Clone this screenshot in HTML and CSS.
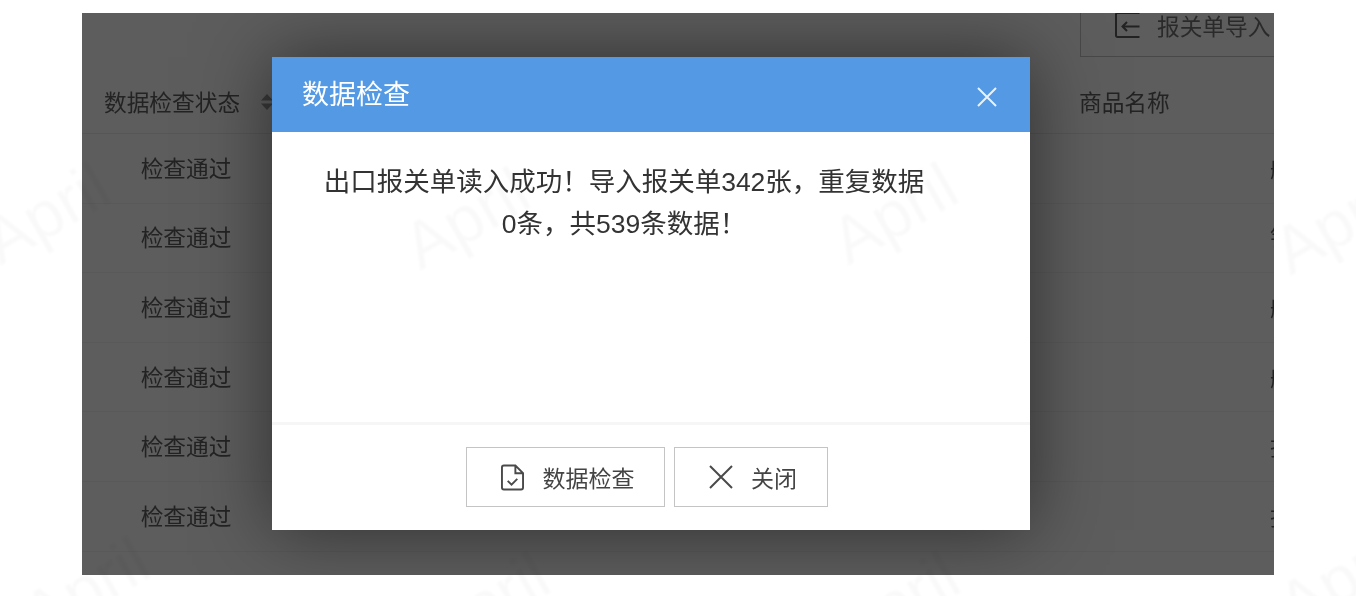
FILE: index.html
```html
<!DOCTYPE html>
<html lang="zh-CN">
<head>
<meta charset="utf-8">
<title>数据检查</title>
<link rel="stylesheet" href="styles.css">
</head>
<body>
<main class="stage">
  <div class="toolbar">
    <button class="import-btn" type="button">
      <svg class="import-icon" viewBox="0 0 26 26" aria-hidden="true"><path d="M24.500 1H2.500A1.500 1.500 0 0 0 1 2.500V23.500A1.500 1.500 0 0 0 2.500 25H24.500M24.500 14.500H7.500M12 10l-4.500 4.500 4.500 4.500"/></svg>
      <span>报关单导入</span>
    </button>
  </div>
  <div class="table">
    <div class="row head">
      <div class="cell status-head">数据检查状态<svg class="sort" viewBox="0 0 14 18" aria-hidden="true"><path d="M7 1l6 6.500H1zM7 17l6-6.500H1z"/></svg></div>
      <div class="cell"></div>
      <div class="cell">商品名称</div>
      <div class="cell"></div>
    </div>
    <div class="row"><div class="cell status">检查通过</div><div class="cell"></div><div class="cell"></div><div class="cell">船舶配件</div></div>
    <div class="row"><div class="cell status">检查通过</div><div class="cell"></div><div class="cell"></div><div class="cell">针织衫</div></div>
    <div class="row"><div class="cell status">检查通过</div><div class="cell"></div><div class="cell"></div><div class="cell">船舶配件</div></div>
    <div class="row"><div class="cell status">检查通过</div><div class="cell"></div><div class="cell"></div><div class="cell">船舶配件</div></div>
    <div class="row"><div class="cell status">检查通过</div><div class="cell"></div><div class="cell"></div><div class="cell">技术配件</div></div>
    <div class="row"><div class="cell status">检查通过</div><div class="cell"></div><div class="cell"></div><div class="cell">技术配件</div></div>
  </div>
  <section class="modal">
    <header class="modal-head">
      <h1>数据检查</h1>
      <svg class="close" viewBox="0 0 20 20" aria-hidden="true"><path d="M1 1l18 18M19 1L1 19"/></svg>
    </header>
    <div class="modal-body">
      <p>出口报关单读入成功！导入报关单342张，重复数据<br>0条，共539条数据！</p>
    </div>
    <footer class="modal-foot">
      <button class="btn check" type="button">
        <svg class="btn-icon doc" viewBox="0 0 24 27" aria-hidden="true"><path d="M15 1H3a2 2 0 0 0-2 2v21a2 2 0 0 0 2 2h18a2 2 0 0 0 2-2V9zM15 1v8h8M7 17l4 4 6-6"/></svg>
        <span>数据检查</span>
      </button>
      <button class="btn shut" type="button">
        <svg class="btn-icon cross" viewBox="0 0 24 24" aria-hidden="true"><path d="M1 1l22 22M23 1L1 23"/></svg>
        <span>关闭</span>
      </button>
    </footer>
  </section>
</main>
<div class="watermarks" aria-hidden="true">
  <span class="mark m1">April</span>
  <span class="mark m2">April</span>
  <span class="mark m3">April</span>
  <span class="mark m4">April</span>
  <span class="mark m5">April</span>
  <span class="mark m6">April</span>
  <span class="mark m7">April</span>
  <span class="mark m8">April</span>
</div>
</body>
</html>
```
FILE: styles.css
```css
* { box-sizing: border-box; }
html, body { margin: 0; height: 100%; background: #fff; overflow: hidden; }
body {
  padding: 13px 82px 21px;
  font-family: "Liberation Sans", "Noto Sans CJK SC", sans-serif;
}
.stage {
  position: relative;
  height: 562px;
  overflow: hidden;
  background: #5d5d5d;
  color: #232323;
  filter: blur(0.5px);
}
.toolbar { height: 44px; padding-left: 998px; }
.import-btn {
  display: flex;
  align-items: center;
  width: 260px;
  height: 44px;
  margin: 0;
  padding: 0 0 18px 34px;
  background: none;
  border: 1px solid #484848;
  border-top: 0;
  color: #2a2a2a;
  font: inherit;
  font-size: 22.7px;
  white-space: nowrap;
}
.import-icon { width: 26px; height: 26px; margin: -1px 16px 0 0; fill: none; stroke: #222; stroke-width: 2; }
.table { display: flex; flex-direction: column; }
.row {
  display: grid;
  grid-template-columns: 208px 789px 191px 200px;
  height: 69.6px;
  padding-bottom: 2px;
  align-items: center;
  font-size: 22.7px;
  border-bottom: 1px solid #595959;
  white-space: nowrap;
}
.row.head { height: 77px; padding: 13px 0 0; border-bottom-color: #565656; }
.status { text-align: center; }
.status-head { display: flex; align-items: center; padding-left: 22px; }
.sort { width: 14px; height: 18px; margin-left: 20px; fill: #3a3a3a; flex: none; }
.modal {
  position: absolute;
  left: 190px;
  top: 44px;
  width: 758px;
  height: 473px;
  display: flex;
  flex-direction: column;
  background: #fff;
  box-shadow: 0 0 70px rgba(0, 0, 0, 0.5);
}
.modal-head {
  height: 75px;
  flex: none;
  display: flex;
  align-items: center;
  justify-content: space-between;
  padding: 0 33px 0 30px;
  background: #5499e4;
  color: #fff;
}
.modal-head h1 { margin: 0 0 4px; font-size: 27px; font-weight: 400; }
.close { width: 20px; height: 20px; margin-top: 4px; fill: none; stroke: #e8f2fc; stroke-width: 2; }
.modal-body { flex: 1; padding: 29px 98px 0 44px; }
.modal-body p {
  margin: 0;
  color: #333;
  text-align: center;
  font-size: 26.5px;
  line-height: 42px;
  white-space: nowrap;
}
.modal-foot {
  height: 108px;
  flex: none;
  display: flex;
  justify-content: center;
  gap: 9px;
  padding: 22px 8px 0 0;
  border-top: 3px solid #f6f6f6;
}
.btn {
  display: flex;
  align-items: center;
  justify-content: center;
  height: 60px;
  margin: 0;
  padding: 0 0 0 4px;
  background: #fff;
  border: 1.5px solid #c4c4c4;
  color: #444;
  font: inherit;
  font-size: 23px;
}
.check { width: 199px; }
.shut { width: 154px; }
.btn-icon { flex: none; fill: none; stroke: #4a4a4a; stroke-width: 2; }
.doc { width: 23px; height: 27px; margin-right: 19px; }
.cross { width: 24px; height: 24px; margin-right: 18px; }
.watermarks { position: fixed; inset: 0; pointer-events: none; filter: blur(1px); }
.mark {
  position: absolute;
  font-size: 66px;
  line-height: 1;
  color: rgba(0, 0, 0, 0.022);
  transform: rotate(-30deg);
}
.m1 { left: -20px; top: 180px; }
.m2 { left: 400px; top: 185px; }
.m3 { left: 828px; top: 180px; }
.m4 { left: 1270px; top: 190px; }
.m5 { left: 20px; top: 555px; }
.m6 { left: 420px; top: 570px; }
.m7 { left: 830px; top: 570px; }
.m8 { left: 1275px; top: 545px; }
```
